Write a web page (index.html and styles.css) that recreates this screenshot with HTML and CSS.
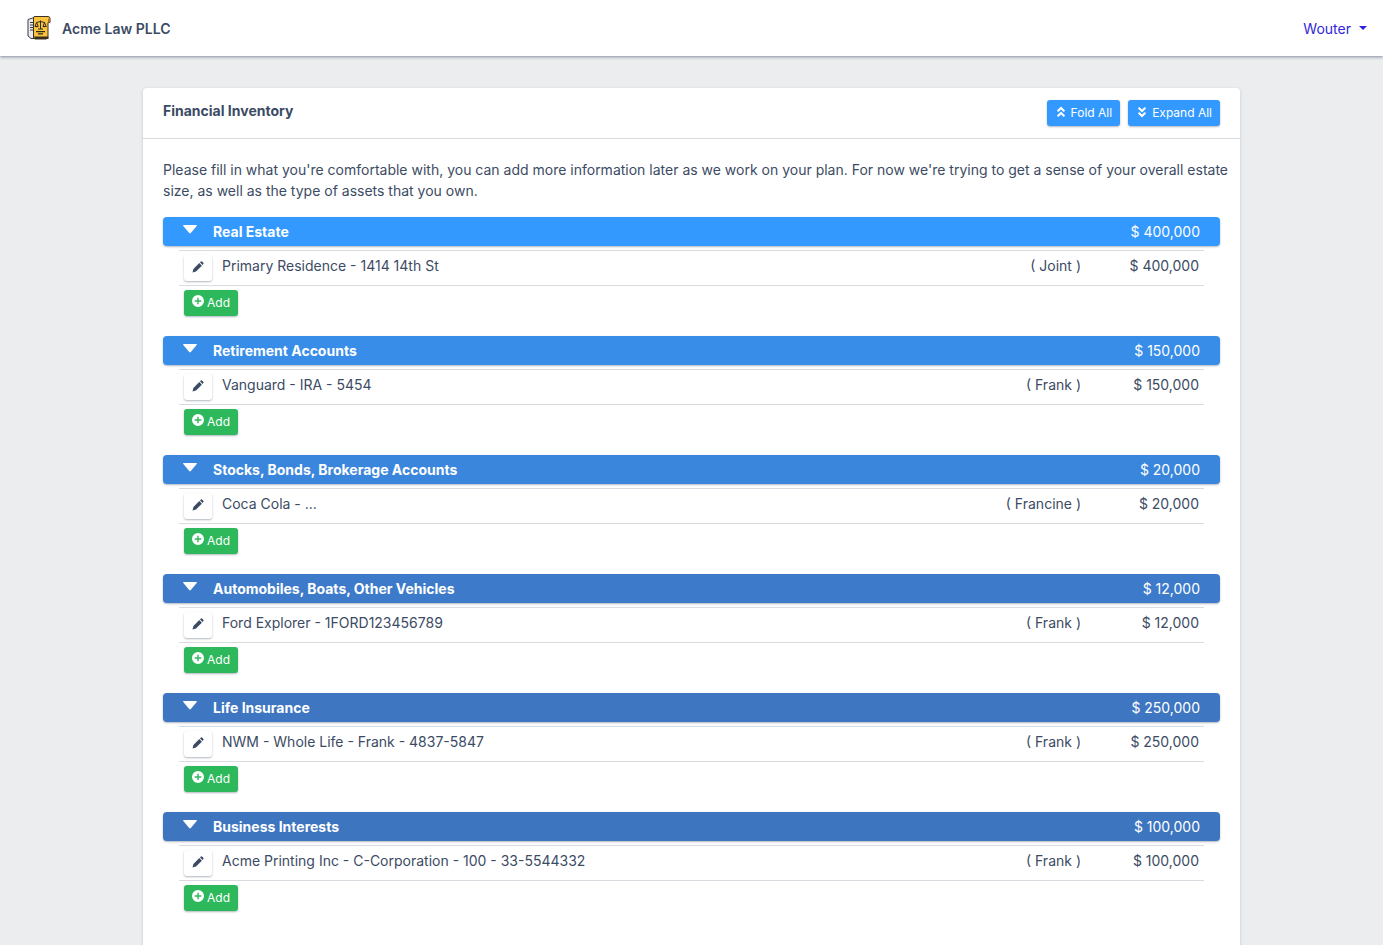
FILE: index.html
```html
<!DOCTYPE html>
<html lang="en">
<head>
    <meta charset="UTF-8">
    <meta name="viewport" content="width=device-width, initial-scale=1.0">
    <title>Financial Inventory</title>
    <link rel="stylesheet" href="styles.css">
</head>
<body>
    <!-- Shared icons -->
    <svg class="sprite" aria-hidden="true">
        <symbol id="caret" viewBox="0 0 14 9"><path d="M0.6 0h12.8q.9.2.3 1L7.8 8q-.8.9-1.6 0L.3 1Q-.3.2.6 0z" fill="currentColor"/></symbol>
        <symbol id="pencil" viewBox="0 0 12 12"><path d="M.5 11.5l.9-3.6 5.9-5.8 2.6 2.6L4 10.6zM8 1.4l.9-.8q.7-.5 1.4.1l1 1q.6.7.1 1.4l-.8.9z" fill="currentColor"/></symbol>
        <symbol id="plus" viewBox="0 0 12 12"><path fill-rule="evenodd" d="M6 0a6 6 0 1 1 0 12A6 6 0 0 1 6 0zM5.3 2.7v2.6H2.7v1.4h2.6v2.6h1.4V6.7h2.6V5.3H6.7V2.7z" fill="currentColor"/></symbol>
        <symbol id="up" viewBox="0 0 8 12"><path d="M.6 5.4L4 2l3.400 3.400M.6 10.400L4 7l3.400 3.400" fill="none" stroke="currentColor" stroke-width="2"/></symbol>
        <symbol id="down" viewBox="0 0 8 12"><path d="M.6 1.600L4 5l3.400-3.400M.6 6.600L4 10l3.400-3.400" fill="none" stroke="currentColor" stroke-width="2"/></symbol>
    </svg>

    <header class="header">
        <a class="brand" href="#">
            <svg class="logo" viewBox="0 0 24 24" aria-hidden="true">
                <path d="M1 3.500L7 1.500V22.500H4L1 20z" fill="#e9eaf0" stroke="#3a3a42"/>
                <path d="M3 6.500h3M3 9h3M3 11.500h3M3 14h3" stroke="#3a3a42"/>
                <path d="M6.500 1.500Q6.500.5 8 .5h13q2 0 2 2v4h-2V20q0 3-2 3H8.500q-2 0-2-2z" fill="#fcc43e" stroke="#3b3322"/>
                <path d="M7 20.500h14.500v2.500H8z" fill="#3b2e20"/>
                <path d="M21 3v3.500h2V3.500q-1-1.500-2-.5z" fill="#a8762a"/>
                <path d="M13.500 4.500v8.500M9.500 6.500l4-1 4 1M9.500 6.500L8 10.500h3.200zM17.500 6.500L16 10.500h3.200zM11 13h5" fill="none" stroke="#2c2923"/>
                <path d="M8 10h3.400q-1.700 2.500-3.400 0zM15.800 10h3.400q-1.700 2.500-3.400 0z" fill="#2c2923"/>
                <path d="M9 15.700h9M11 17.900h5" stroke="#2c2923" stroke-width="1.200"/>
            </svg>
            <span>Acme Law PLLC</span>
        </a>
        <button class="user-menu" type="button">Wouter</button>
    </header>

    <main class="container">
        <div class="card">
            <div class="card-header">
                <h1>Financial Inventory</h1>
                <div class="card-actions">
                    <button class="btn btn-info" type="button"><svg class="icon-chevron"><use href="#up"/></svg>Fold All</button>
                    <button class="btn btn-info" type="button"><svg class="icon-chevron"><use href="#down"/></svg>Expand All</button>
                </div>
            </div>
            <div class="card-body">
                <p class="intro">Please fill in what you're comfortable with, you can add more information later as we work on your plan. For now we're trying to get a sense of your overall estate size, as well as the type of assets that you own.</p>

                <section class="category">
                    <h2 class="category-header real-estate"><button class="fold" type="button"><svg class="icon-caret"><use href="#caret"/></svg><span>Real Estate</span><span class="total">$ 400,000</span></button></h2>
                    <div class="category-body">
                        <table class="assets">
                            <tr><td class="edit"><button class="btn btn-edit" type="button" aria-label="Edit"><svg class="icon-pencil"><use href="#pencil"/></svg></button></td><td>Primary Residence - 1414 14th St</td><td class="owner">( Joint )</td><td class="amount">$ 400,000</td></tr>
                        </table>
                        <button class="btn btn-add" type="button"><svg class="icon-plus"><use href="#plus"/></svg>Add</button>
                    </div>
                </section>

                <section class="category">
                    <h2 class="category-header retirement"><button class="fold" type="button"><svg class="icon-caret"><use href="#caret"/></svg><span>Retirement Accounts</span><span class="total">$ 150,000</span></button></h2>
                    <div class="category-body">
                        <table class="assets">
                            <tr><td class="edit"><button class="btn btn-edit" type="button" aria-label="Edit"><svg class="icon-pencil"><use href="#pencil"/></svg></button></td><td>Vanguard - IRA - 5454</td><td class="owner">( Frank )</td><td class="amount">$ 150,000</td></tr>
                        </table>
                        <button class="btn btn-add" type="button"><svg class="icon-plus"><use href="#plus"/></svg>Add</button>
                    </div>
                </section>

                <section class="category">
                    <h2 class="category-header stocks"><button class="fold" type="button"><svg class="icon-caret"><use href="#caret"/></svg><span>Stocks, Bonds, Brokerage Accounts</span><span class="total">$ 20,000</span></button></h2>
                    <div class="category-body">
                        <table class="assets">
                            <tr><td class="edit"><button class="btn btn-edit" type="button" aria-label="Edit"><svg class="icon-pencil"><use href="#pencil"/></svg></button></td><td>Coca Cola - ...</td><td class="owner">( Francine )</td><td class="amount">$ 20,000</td></tr>
                        </table>
                        <button class="btn btn-add" type="button"><svg class="icon-plus"><use href="#plus"/></svg>Add</button>
                    </div>
                </section>

                <section class="category">
                    <h2 class="category-header vehicles"><button class="fold" type="button"><svg class="icon-caret"><use href="#caret"/></svg><span>Automobiles, Boats, Other Vehicles</span><span class="total">$ 12,000</span></button></h2>
                    <div class="category-body">
                        <table class="assets">
                            <tr><td class="edit"><button class="btn btn-edit" type="button" aria-label="Edit"><svg class="icon-pencil"><use href="#pencil"/></svg></button></td><td>Ford Explorer - 1FORD123456789</td><td class="owner">( Frank )</td><td class="amount">$ 12,000</td></tr>
                        </table>
                        <button class="btn btn-add" type="button"><svg class="icon-plus"><use href="#plus"/></svg>Add</button>
                    </div>
                </section>

                <section class="category">
                    <h2 class="category-header insurance"><button class="fold" type="button"><svg class="icon-caret"><use href="#caret"/></svg><span>Life Insurance</span><span class="total">$ 250,000</span></button></h2>
                    <div class="category-body">
                        <table class="assets">
                            <tr><td class="edit"><button class="btn btn-edit" type="button" aria-label="Edit"><svg class="icon-pencil"><use href="#pencil"/></svg></button></td><td>NWM - Whole Life - Frank - 4837-5847</td><td class="owner">( Frank )</td><td class="amount">$ 250,000</td></tr>
                        </table>
                        <button class="btn btn-add" type="button"><svg class="icon-plus"><use href="#plus"/></svg>Add</button>
                    </div>
                </section>

                <section class="category">
                    <h2 class="category-header business"><button class="fold" type="button"><svg class="icon-caret"><use href="#caret"/></svg><span>Business Interests</span><span class="total">$ 100,000</span></button></h2>
                    <div class="category-body">
                        <table class="assets">
                            <tr><td class="edit"><button class="btn btn-edit" type="button" aria-label="Edit"><svg class="icon-pencil"><use href="#pencil"/></svg></button></td><td>Acme Printing Inc - C-Corporation - 100 - 33-5544332</td><td class="owner">( Frank )</td><td class="amount">$ 100,000</td></tr>
                        </table>
                        <button class="btn btn-add" type="button"><svg class="icon-plus"><use href="#plus"/></svg>Add</button>
                    </div>
                </section>
            </div>
        </div>
    </main>
</body>
</html>
```
FILE: styles.css
```css
* {
    box-sizing: border-box;
}
body {
    margin: 0;
    min-height: 100vh;
    display: flex;
    flex-direction: column;
    font-family: Inter, "Liberation Sans", sans-serif;
    font-size: 14px;
    line-height: 21px;
    color: #3c4b64;
    background-color: #ebedef;
}
button {
    font: inherit;
    color: inherit;
    border: 0;
    background: none;
    cursor: pointer;
}
svg {
    flex: none;
}
.sprite {
    position: absolute;
    width: 0;
    height: 0;
}

/* Top bar */
.header {
    display: flex;
    align-items: center;
    justify-content: space-between;
    height: 56px;
    padding: 0 16px 0 27px;
    background-color: #fff;
    box-shadow: 0 1px 3px rgba(60, 75, 100, 0.6);
}
.brand {
    display: flex;
    align-items: center;
    gap: 11px;
    font-weight: 600;
    color: inherit;
    text-decoration: none;
}
.logo {
    width: 24px;
    height: 24px;
}
.user-menu {
    display: flex;
    align-items: center;
    gap: 8px;
    padding: 0;
    color: #321fdb;
}
.user-menu::after {
    content: "";
    border: 4px solid transparent;
    border-top-color: currentColor;
    border-bottom: 0;
}

/* Card */
.container {
    flex: 1;
    display: flex;
    width: 100%;
    max-width: 1097px;
    margin: 0 auto;
    padding-top: 32px;
}
.card {
    width: 100%;
    background-color: #fff;
    border-radius: 4px 4px 0 0;
    box-shadow: 0 1px 3px rgba(60, 75, 100, 0.25);
}
.card-header {
    display: flex;
    justify-content: space-between;
    padding: 12px 20px;
    border-bottom: 1px solid #d8dbe0;
}
.card-header h1 {
    margin: 0;
    font-size: 14px;
    font-weight: 700;
}
.card-actions {
    display: flex;
    gap: 8px;
}
.card-body {
    padding: 20px;
}
.intro {
    margin: 0 -16px 16px 0;
}

/* Buttons */
.btn {
    display: flex;
    align-items: center;
    height: 26px;
    padding: 0 8px 1px;
    font-size: 12px;
    border-radius: 3px;
    box-shadow: 0 1px 2px rgba(60, 75, 100, 0.4);
}
.btn-info {
    gap: 6px;
    padding-left: 10px;
    color: #fff;
    background-color: #39f;
}
.btn-add {
    gap: 3px;
    margin-left: 5px;
    color: #fff;
    background-color: #2eb85c;
}
.btn-edit {
    justify-content: center;
    width: 28px;
    background-color: #fff;
}
.icon-chevron {
    width: 8px;
    height: 12px;
    margin-bottom: 2px;
}
.icon-plus {
    width: 12px;
    height: 12px;
    margin-bottom: 3px;
}
.icon-pencil {
    width: 12px;
    height: 12px;
    margin-bottom: 2px;
}
.icon-caret {
    width: 14px;
    height: 9px;
    margin: 0 16px 3px 0;
}

/* Categories */
.category {
    margin-bottom: 20px;
}
.category-header {
    margin: 0 0 4px;
    font-size: 14px;
    font-weight: 700;
    color: #fff;
    border-radius: 4px;
    box-shadow: 0 1px 2px rgba(60, 75, 100, 0.4);
}
.fold {
    display: flex;
    align-items: center;
    width: 100%;
    height: 29px;
    padding: 0 20px 1px;
}
.total {
    margin-left: auto;
    font-weight: 400;
}
.real-estate {
    background-color: #3399ff;
}
.retirement {
    background-color: #388de9;
}
.stocks {
    background-color: #3b86dd;
}
.vehicles {
    background-color: #3d7bca;
}
.insurance {
    background-color: #3e76c1;
}
.business {
    background-color: #3e75bf;
}
.category-body {
    padding: 0 16px;
}
.assets {
    width: 100%;
    margin-bottom: 4px;
    border-collapse: separate;
    border-spacing: 0;
    border-top: 1px solid #d8dbe0;
    border-bottom: 1px solid #d8dbe0;
}
.assets td {
    height: 34px;
    padding: 4px 5px 9px;
    vertical-align: top;
}
.assets .edit {
    width: 38px;
    padding-bottom: 0;
}
.assets .owner {
    width: 120px;
    text-align: right;
}
.assets .amount {
    width: 118px;
    text-align: right;
}
```
